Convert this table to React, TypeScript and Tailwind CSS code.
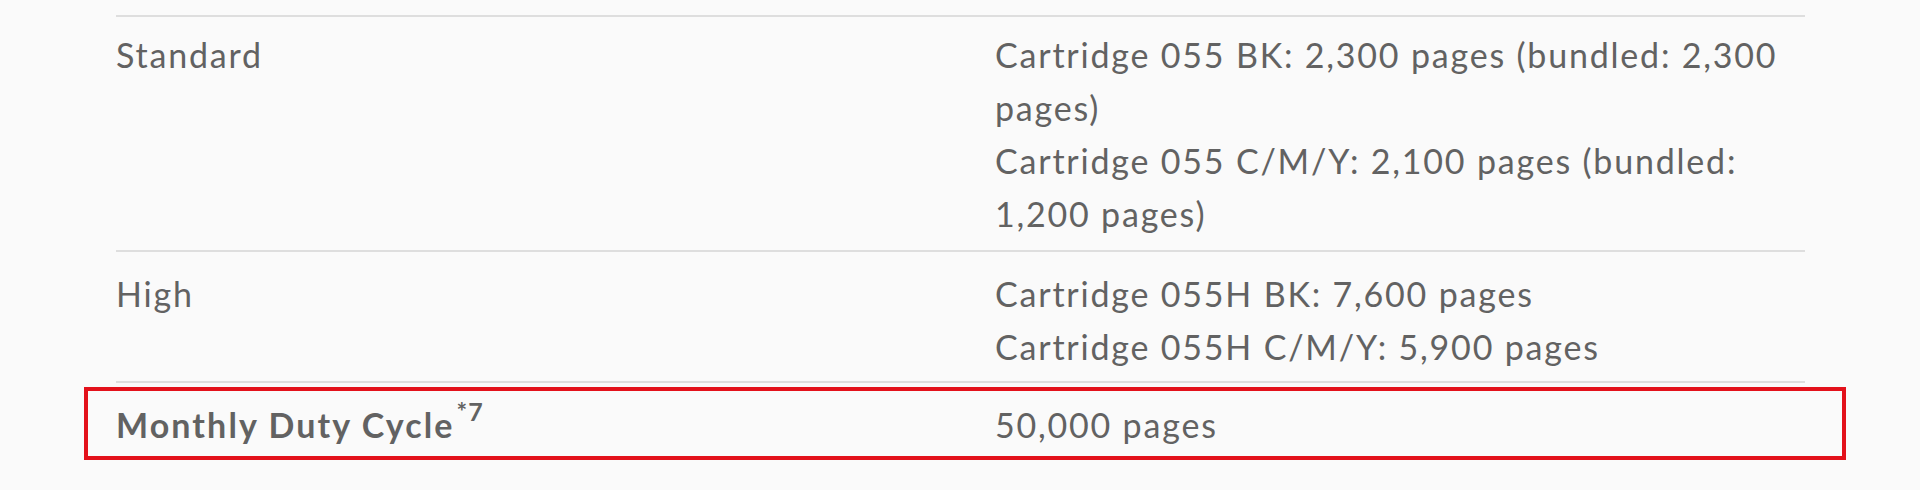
import React from "react";

export default function App() {
  return (
    <div
      className="w-[1920px] h-[490px] bg-[#fafafa] text-[#626262] text-[34px] leading-[53px] tracking-[1.8px]"
      style={{ fontFamily: "Lato, 'Open Sans', sans-serif" }}
    >
      <div className="pt-[15px] ml-[116px] w-[1689px]">
        <div className="grid grid-cols-[879px_1fr] border-t-2 border-[#dedede] pt-[11px] pb-[10px]">
          <div>Standard</div>
          <div>
            <div>Cartridge 055 BK: 2,300 pages (bundled: 2,300 pages)</div>
            <div>Cartridge 055 C/M/Y: 2,100 pages (bundled: 1,200 pages)</div>
          </div>
        </div>
        <div className="grid grid-cols-[879px_1fr] border-t-2 border-[#dedede] pt-[15px] pb-[8px]">
          <div>High</div>
          <div>
            <div>Cartridge 055H BK: 7,600 pages</div>
            <div>Cartridge 055H C/M/Y: 5,900 pages</div>
          </div>
        </div>
        <div className="relative grid grid-cols-[879px_1fr] border-t-2 border-[#dedede] pt-[15px] pb-[13px]">
          <div className="font-bold tracking-[2.1px]">
            Monthly Duty Cycle<sup className="text-[25px] top-[-17px] tracking-[1px] ml-[2px]">*7</sup>
          </div>
          <div>50,000 pages</div>
          <div className="absolute left-[-32px] right-[-41px] top-[4px] h-[73px] border-[4px] border-[#e3111b]" />
        </div>
      </div>
    </div>
  );
}
